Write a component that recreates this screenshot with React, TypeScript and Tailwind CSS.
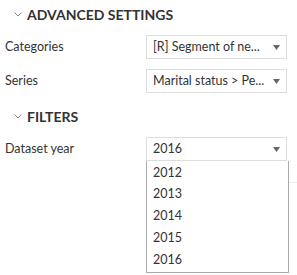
import React from 'react';

const font = { fontFamily: 'Lato, "Open Sans", "Liberation Sans", sans-serif' };

function Chevron() {
  return (
    <svg className="h-[5px] w-[8px] text-[#888]" viewBox="0 0 8 5" fill="none" stroke="currentColor">
      <path d="M0.5 0.5 L4 4 L7.5 0.5" strokeWidth={1} />
    </svg>
  );
}

function Arrow() {
  return (
    <svg className="h-[5px] w-[7px] shrink-0 text-[#666]" viewBox="0 0 7 5" fill="currentColor">
      <path d="M0 0 H7 L3.5 5 Z" />
    </svg>
  );
}

function SectionTitle({ title }: { title: string }) {
  return (
    <div className="flex h-[20px] items-center">
      <div className="flex w-[22px] justify-center pl-[3px]">
        <Chevron />
      </div>
      <span className="text-[14px] font-bold text-[#333]">{title}</span>
    </div>
  );
}

function SelectRow({ label, value }: { label: string; value: string }) {
  return (
    <div className="flex items-center">
      <span className="w-[141px] text-[12.5px] text-[#333]">{label}</span>
      <div className="flex h-[24px] w-[141px] items-center justify-between border border-[#ddd] bg-white pl-[6px] pr-[6px]">
        <span className="whitespace-nowrap text-[12.5px] text-[#333]">{value}</span>
        <Arrow />
      </div>
    </div>
  );
}

export default function App() {
  const years = ['2012', '2013', '2014', '2015', '2016'];

  return (
    <div className="h-[275px] w-[297px] overflow-hidden bg-white pl-[5px]" style={font}>
      <div className="pt-[4px]">
        <SectionTitle title="ADVANCED SETTINGS" />
      </div>
      <div className="mt-[11px] flex flex-col gap-[10px]">
        <SelectRow label="Categories" value="[R] Segment of ne..." />
        <SelectRow label="Series" value="Marital status > Pe..." />
      </div>
      <div className="mt-[13px]">
        <SectionTitle title="FILTERS" />
      </div>
      <div className="mt-[11px]">
        <SelectRow label="Dataset year" value="2016" />
        <div className="relative">
          <div className="ml-[141px] w-[143px] border border-t-0 border-[#aaa] bg-white pb-[1px] pt-[1px]">
            {years.map((y) => (
              <div key={y} className="flex h-[21.8px] items-center pl-[6px] text-[12.5px] text-[#333]">
                {y}
              </div>
            ))}
          </div>
          <div className="absolute left-[284px] top-[21px] h-px w-[13px] bg-[#eee]" />
        </div>
      </div>
    </div>
  );
}
